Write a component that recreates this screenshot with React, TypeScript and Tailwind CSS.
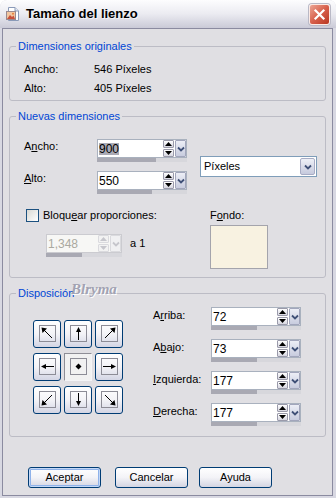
import React from "react";

type Dir = "nw" | "n" | "ne" | "w" | "c" | "e" | "sw" | "s" | "se";

// arrow glyphs for the placement grid, drawn in a 15x15 box
const ARROWS: Record<Dir, { line?: [number, number, number, number]; head: string }> = {
	nw: { line: [12, 12, 3, 3], head: "1.5,1.5 7,2.5 2.5,7" },
	n: { line: [7.5, 14, 7.5, 4], head: "7.5,1 5,6 10,6" },
	ne: { line: [3, 12, 12, 3], head: "13.5,1.5 8,2.5 12.5,7" },
	w: { line: [14, 7.5, 4, 7.5], head: "1,7.5 6,5 6,10" },
	c: { head: "7.5,4.5 10.5,7.5 7.5,10.5 4.5,7.5" },
	e: { line: [1, 7.5, 11, 7.5], head: "14,7.5 9,5 9,10" },
	sw: { line: [12, 3, 3, 12], head: "1.5,13.5 2.5,8 7,12.5" },
	s: { line: [7.5, 1, 7.5, 11], head: "7.5,14 5,9 10,9" },
	se: { line: [3, 3, 12, 12], head: "13.5,13.5 12.5,8 8,12.5" },
};

function PlaceButton({ dir }: { dir: Dir }) {
	const a = ARROWS[dir];
	const pressed = dir === "c";
	return (
		<div
			className={
				pressed
					? "flex h-[28px] w-[28px] items-center justify-center border border-[#8e8e96] border-r-[#f4f4f6] border-b-[#f4f4f6] bg-[#f1f1f1]"
					: "flex h-[28px] w-[28px] items-center justify-center rounded-[3px] border border-[#003c74] bg-gradient-to-b from-white via-[#f3f3f7] to-[#d3d5e4]"
			}
		>
			<div className="flex h-[17px] w-[17px] items-center justify-center border border-[#8c8c96]">
				<svg width="15" height="15" viewBox="0 0 15 15">
					{a.line && <line x1={a.line[0]} y1={a.line[1]} x2={a.line[2]} y2={a.line[3]} stroke="#000" strokeWidth="1" />}
					<polygon points={a.head} fill="#000" />
				</svg>
			</div>
		</div>
	);
}

function MiniBtn({ down, disabled }: { down?: boolean; disabled?: boolean }) {
	return (
		<div
			className={`flex h-[8px] items-center justify-center rounded-[1px] border ${
				disabled ? "border-[#dadade] bg-[#f2f2f2]" : "border-[#9a9aaa] bg-gradient-to-b from-white to-[#d6d6e0]"
			}`}
		>
			<svg width="7" height="4" viewBox="0 0 7 4">
				<polygon points={down ? "0,0 7,0 3.5,4" : "3.5,0 7,4 0,4"} fill={disabled ? "#c6c6cc" : "#000"} />
			</svg>
		</div>
	);
}

function Chevron({ color }: { color: string }) {
	return (
		<svg width="8" height="6" viewBox="0 0 8 6">
			<polyline points="1,1.5 4,4.5 7,1.5" fill="none" stroke={color} strokeWidth="1.8" />
		</svg>
	);
}

function SpinBox({ value, fill, width, selected, disabled }: { value: string; fill: number; width: string; selected?: boolean; disabled?: boolean }) {
	return (
		<div className={`flex shrink-0 flex-col ${width}`}>
			<div className={`flex h-[19px] border ${disabled ? "border-[#cbcbd0] bg-[#f7f7f5]" : "border-[#a9b1be] bg-white"}`}>
				<div className="flex flex-1 items-center pl-[1px]">
					<span className={`inline-block h-[12px] text-[12px] leading-[12px] ${selected ? "bg-[#aaaab4]" : ""} ${disabled ? "text-[#aaa9a0]" : "text-black"}`}>{value}</span>
				</div>
				<div className="flex w-[11px] flex-col gap-[1px]">
					<MiniBtn disabled={disabled} />
					<MiniBtn down disabled={disabled} />
				</div>
				<div
					className={`ml-[1px] flex w-[11px] items-center justify-center rounded-[1px] border ${
						disabled ? "border-[#dadade] bg-[#f0f0f2]" : "border-[#a2a6bc] bg-gradient-to-b from-[#eceef6] to-[#c8ccde]"
					}`}
				>
					<Chevron color={disabled ? "#c6c6cc" : "#3f5077"} />
				</div>
			</div>
			<div className="flex h-[4px] bg-[#d7d7dc]">
				<div className="h-full bg-[#a9a9b3]" style={{ width: fill }} />
			</div>
		</div>
	);
}

function Group({ title, children, className = "" }: { title: string; children: React.ReactNode; className?: string }) {
	return (
		<fieldset className={`relative rounded-[3px] border border-[#bcbcc5] ${className}`}>
			<legend className="ml-[6px] px-[2px] text-[11px] leading-[13px] text-[#0046d5]">{title}</legend>
			{children}
		</fieldset>
	);
}

function DlgButton({ label, isDefault, className = "" }: { label: string; isDefault?: boolean; className?: string }) {
	return (
		<div
			className={`flex h-[21px] w-[73px] items-center justify-center rounded-[3px] border border-[#003c74] bg-gradient-to-b from-white via-[#f3f3f7] to-[#d4d5e2] text-[11px] ${
				isDefault ? "shadow-[inset_0_0_0_1px_#c4d8f6,inset_0_0_0_2px_#8fb2ea]" : ""
			} ${className}`}
		>
			{label}
		</div>
	);
}

const positionRows = [
	{ pre: "A", key: "r", post: "riba:", value: "72" },
	{ pre: "A", key: "b", post: "ajo:", value: "73" },
	{ pre: "", key: "I", post: "zquierda:", value: "177" },
	{ pre: "", key: "D", post: "erecha:", value: "177" },
];

export default function App() {
	return (
		<div className="h-[498px] w-[336px] bg-white font-['Liberation_Sans',Arial,sans-serif] text-[11px] text-black">
			<div className="flex h-full flex-col rounded-t-[7px] bg-[#d8d8e2] pr-[3px] pb-[2px] pl-[2px]">
				{/* title bar */}
				<div className="-mr-[3px] -ml-[2px] flex h-[28px] shrink-0 items-center rounded-t-[7px] bg-gradient-to-b from-[#fdfdfe] via-[#ebebf1] to-[#cacad7] pr-[6px] pl-[5px]">
					<svg width="16" height="16" viewBox="0 0 16 16">
						<path d="M3.5 1.5 H10 L13.5 5 V14.5 H3.5 Z" fill="#fff" stroke="#8a9ab8" />
						<path d="M10 1.5 V5 H13.5" fill="#e4e8f2" stroke="#8a9ab8" />
						<rect x="1.5" y="5.5" width="9" height="8" fill="#f2c6a0" stroke="#9a8a90" />
						<path d="M2 13 L5 9 L7 11 L8.5 9.5 L10 13 Z" fill="#c8503a" />
						<circle cx="8" cy="7.8" r="1" fill="#e8803a" />
					</svg>
					<span className="ml-[5px] text-[13px] leading-[16px] font-bold [text-shadow:1px_1px_0_#f4f4f8]">Tamaño del lienzo</span>
					<div className="ml-auto flex h-[21px] w-[21px] items-center justify-center rounded-[3px] border border-[#fbe9e4] bg-gradient-to-br from-[#eba595] via-[#d75f4b] to-[#b8351f] shadow-[0_0_0_1px_#b9b9c6]">
						<svg width="13" height="13" viewBox="0 0 13 13">
							<path d="M2.5 2.5 L10.5 10.5 M10.5 2.5 L2.5 10.5" stroke="#fff" strokeWidth="2.2" strokeLinecap="square" />
						</svg>
					</div>
				</div>

				{/* dialog body */}
				<div className="flex flex-1 flex-col border border-[#8b8ba0] bg-[#e0dfe3] px-[6px] pt-[11px]">
					<Group title="Dimensiones originales">
						<div className="flex flex-col pt-[7px] pb-[2px] pl-[14px]">
							<div className="flex h-[19px] items-center">
								<span className="w-[70px]">Ancho:</span>
								<span>546 Píxeles</span>
							</div>
							<div className="flex h-[19px] items-center">
								<span className="w-[70px]">Alto:</span>
								<span>405 Píxeles</span>
							</div>
						</div>
					</Group>

					<Group title="Nuevas dimensiones" className="mt-[9px]">
						<div className="flex flex-col pt-[16px] pb-[8px] pl-[14px]">
							<div className="flex items-center">
								<div className="flex flex-col gap-[9px]">
									<div className="flex items-start">
										<span className="w-[73px] pt-[1px] leading-[13px]">
											A<span className="underline underline-offset-1">n</span>cho:
										</span>
										<SpinBox value="900" fill={59} width="w-[90px]" selected />
									</div>
									<div className="flex items-start">
										<span className="w-[73px] pt-[1px] leading-[13px]">
											<span className="underline underline-offset-1">A</span>lto:
										</span>
										<SpinBox value="550" fill={55} width="w-[90px]" />
									</div>
								</div>
								<div className="ml-[13px] flex h-[21px] w-[117px] border border-[#7f9db9] bg-white">
									<div className="flex flex-1 items-center pl-[3px]">Píxeles</div>
									<div className="m-[1px] flex w-[15px] items-center justify-center rounded-[2px] border border-[#a8acc4] bg-gradient-to-b from-[#eef0f7] to-[#c6cadd]">
										<Chevron color="#3f5077" />
									</div>
								</div>
							</div>

							<div className="mt-[15px] flex">
								<div className="flex w-[186px] flex-col">
									<div className="flex h-[13px] items-center pl-[2px]">
										<div className="h-[13px] w-[13px] border border-[#1c5180] bg-gradient-to-br from-[#d9d9d4] to-white" />
										<span className="ml-[4px] leading-[13px]">
											Bloqu<span className="underline underline-offset-1">e</span>ar proporciones:
										</span>
									</div>
									<div className="mt-[12px] flex items-start pl-[22px]">
										<SpinBox value="1,348" fill={36} width="w-[76px]" disabled />
										<span className="ml-[8px] pt-[3px] leading-[13px]">a 1</span>
									</div>
								</div>
								<div className="flex flex-col">
									<span className="h-[13px] leading-[13px]">
										F<span className="underline underline-offset-1">o</span>ndo:
									</span>
									<div className="mt-[3px] h-[44px] w-[58px] border border-[#a4a4ac] bg-[#f8f2e1]" />
								</div>
							</div>
						</div>
					</Group>

					<Group title="Disposición" className="mt-[9px]">
						<span className="pointer-events-none absolute -top-[18px] left-[61px] font-['Liberation_Serif',serif] text-[15px] leading-[15px] font-bold text-[#a2a2b2] italic [text-shadow:1px_1px_0_#ffffff]">
							Blryma
						</span>
						<div className="flex items-center pt-[7px] pb-[10px] pl-[23px]">
							<div className="grid grid-cols-3 gap-x-[3px] gap-y-[5px]">
								{(["nw", "n", "ne", "w", "c", "e", "sw", "s", "se"] as Dir[]).map((d) => (
									<PlaceButton key={d} dir={d} />
								))}
							</div>
							<div className="ml-[30px] flex flex-col gap-[9px]">
								{positionRows.map((r) => (
									<div key={r.post} className="flex items-start">
										<span className="w-[58px] pt-[2px] leading-[13px]">
											{r.pre}
											<span className="underline underline-offset-1">{r.key}</span>
											{r.post}
										</span>
										<SpinBox value={r.value} fill={46} width="w-[90px]" />
									</div>
								))}
							</div>
						</div>
					</Group>

					<div className="mt-[30px] ml-[19px] flex">
						<DlgButton label="Aceptar" isDefault />
						<DlgButton label="Cancelar" className="ml-[14px]" />
						<DlgButton label="Ayuda" className="ml-[11px]" />
					</div>
				</div>
			</div>
		</div>
	);
}
